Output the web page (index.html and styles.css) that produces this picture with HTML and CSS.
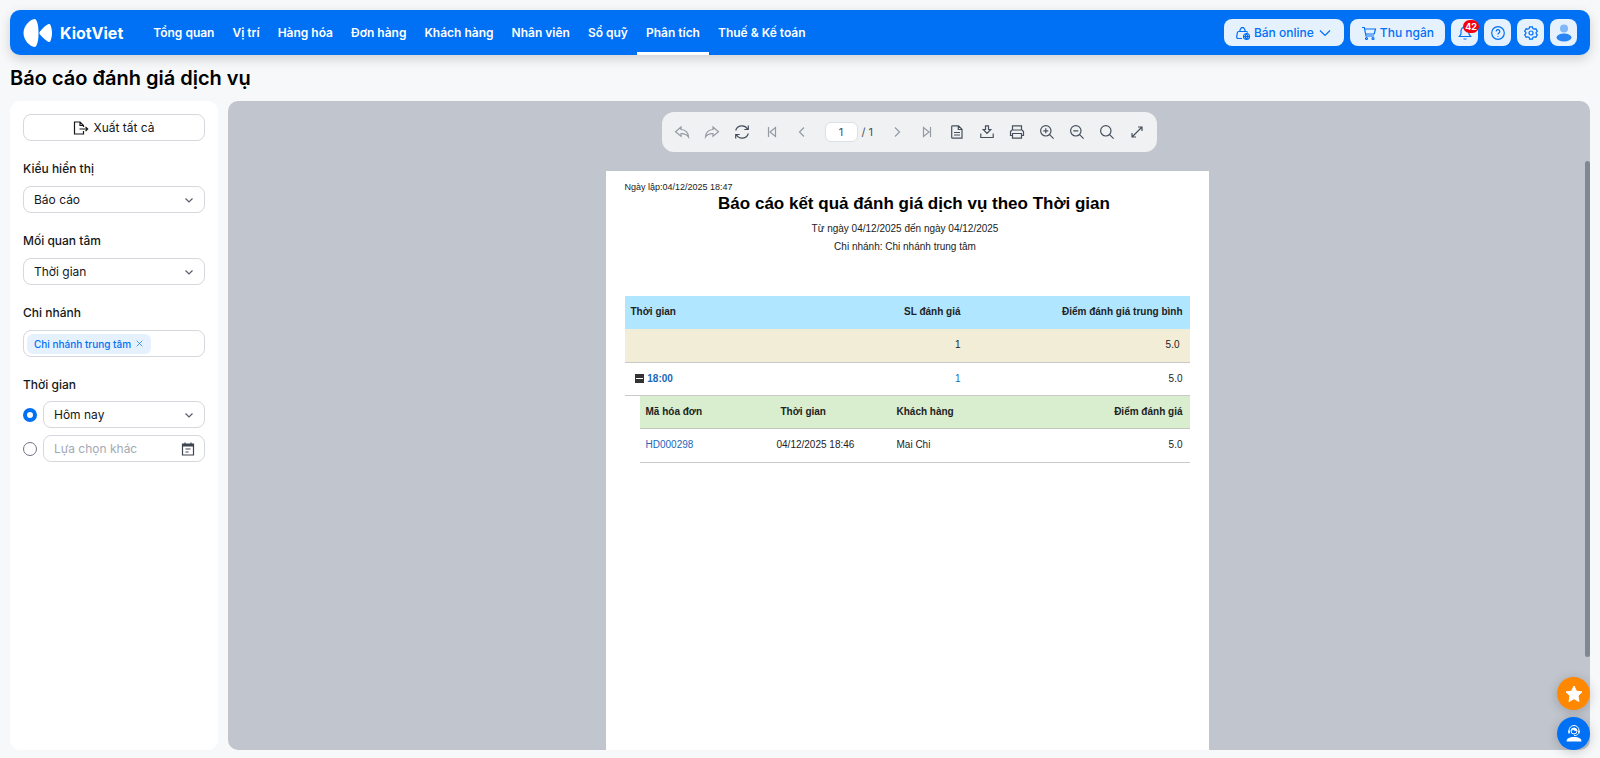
FILE: index.html
```
<!DOCTYPE html>
<html lang="vi">
<head>
    <meta charset="UTF-8">
    <meta name="viewport" content="width=device-width, initial-scale=1.0">
    <title>Báo cáo đánh giá dịch vụ</title>
    <link rel="stylesheet" href="styles.css">
</head>
<body>
    <header class="topbar">
        <a class="logo" href="#">
            <svg width="30" height="30" viewBox="0 0 30 30" fill="currentColor"><path d="M11.5 1C13.500 1 15.500 5.500 15.500 15S13.500 29 11.500 29C7 28.500.5 22.500.5 15S7 1.500 11.500 1z"/><path d="M17 13.400C19 11 22.500 7.500 25 6.300c1.300-.6 2.200-.2 2.600 1 .9 2.500 1.400 5 1.400 7.700s-.5 5.200-1.400 7.700c-.4 1.200-1.300 1.600-2.600 1-2.500-1.200-6-4.700-8-7.100-.8-1.100-.8-2.100 0-3.200z"/></svg>
            <span>KiotViet</span>
        </a>
        <nav class="menu">
            <a href="#">Tổng quan</a>
            <a href="#">Vị trí</a>
            <a href="#">Hàng hóa</a>
            <a href="#">Đơn hàng</a>
            <a href="#">Khách hàng</a>
            <a href="#">Nhân viên</a>
            <a href="#">Sổ quỹ</a>
            <a href="#" class="active">Phân tích</a>
            <a href="#">Thuế &amp; Kế toán</a>
        </nav>
        <div class="actions">
            <button type="button" class="action">
                <svg class="icon" viewBox="0 0 16 16"><path d="M7 13.500H3.200a1.500 1.500 0 0 1-1.500-1.700l.6-4A1.500 1.500 0 0 1 3.800 6.500h7.400a1.500 1.500 0 0 1 1.400 1M5 6.500V5l1.500-2.300h2L10 5v1.500"/><circle cx="11.500" cy="11.500" r="3"/><path d="M8.500 11.500h6M11.500 8.500c-1.500 2-1.500 4 0 6M11.500 8.500c1.500 2 1.500 4 0 6"/></svg>
                Bán online
                <svg class="icon" viewBox="0 0 16 16"><path d="M3 5.500l5 5 5-5"/></svg>
            </button>
            <button type="button" class="action">
                <svg class="icon" viewBox="0 0 16 16"><path d="M1 2.500h2.300l1.700 8.500h8M3.600 4h10.900l-1.300 5H4.700"/><circle cx="5.500" cy="13.500" r="1"/><circle cx="12" cy="13.500" r="1"/></svg>
                Thu ngân
            </button>
            <button type="button" class="action square" aria-label="Thông báo">
                <svg class="icon" viewBox="0 0 16 16"><path d="M8 2a4 4 0 0 0-4 4v3l-1.700 2.500h11.400L12 9V6a4 4 0 0 0-4-4zM6.500 14h3"/></svg>
                <span class="badge">42</span>
            </button>
            <button type="button" class="action square" aria-label="Trợ giúp">
                <svg class="icon" viewBox="0 0 16 16"><circle cx="8" cy="8" r="6.300"/><path d="M6.200 6.500a1.800 1.800 0 1 1 2.700 1.500c-.6.400-.9.700-.9 1.400M8 11v.8"/></svg>
            </button>
            <button type="button" class="action square" aria-label="Thiết lập">
                <svg class="icon" viewBox="0 0 16 16"><path d="M6.600 1.800h2.800l.5 1.700 1.300.7 1.700-.4 1.400 2.400L13.100 7.500v1l1.200 1.300-1.400 2.400-1.700-.4-1.300.7-.5 1.700H6.600l-.5-1.700-1.300-.7-1.700.4-1.400-2.400 1.200-1.300v-1L1.700 6.200l1.400-2.400 1.700.4 1.300-.7z"/><circle cx="8" cy="8" r="2"/></svg>
            </button>
            <button type="button" class="action square" aria-label="Tài khoản">
                <svg class="avatar" viewBox="0 0 18 18"><circle cx="9" cy="4.500" r="4" fill="#7fb7f9"/><ellipse cx="9" cy="13.500" rx="7.500" ry="4" fill="#2684f5"/></svg>
            </button>
        </div>
    </header>

    <h1>Báo cáo đánh giá dịch vụ</h1>

    <div class="content">
        <aside class="filters">
            <button type="button" class="control export">
                <svg class="icon" viewBox="0 0 16 16"><path d="M10.500 11v3h-9V2H7l3.500 3.500V7M7 2v3.500h3.500M6.500 9h8M12.500 6.800L14.700 9l-2.200 2.200"/></svg>
                Xuất tất cả
            </button>
            <div class="group">
                <label for="view">Kiểu hiển thị</label>
                <div class="dropdown">
                    <select id="view" class="control"><option>Báo cáo</option><option>Biểu đồ</option></select>
                    <svg class="icon" viewBox="0 0 16 16"><path d="M4.500 6.500L8 10l3.500-3.500"/></svg>
                </div>
            </div>
            <div class="group">
                <label for="concern">Mối quan tâm</label>
                <div class="dropdown">
                    <select id="concern" class="control"><option>Thời gian</option></select>
                    <svg class="icon" viewBox="0 0 16 16"><path d="M4.500 6.500L8 10l3.500-3.500"/></svg>
                </div>
            </div>
            <div class="group">
                <label for="branch">Chi nhánh</label>
                <div class="control tags">
                    <span class="tag">Chi nhánh trung tâm
                        <button type="button" aria-label="Xóa"><svg class="icon" viewBox="0 0 16 16"><path d="M3 3l10 10M13 3L3 13"/></svg></button>
                    </span>
                    <input type="text" id="branch">
                </div>
            </div>
            <fieldset class="group">
                <legend>Thời gian</legend>
                <div class="choice">
                    <input type="radio" name="time" aria-label="Hôm nay" checked>
                    <div class="dropdown">
                        <select class="control" aria-label="Khoảng thời gian"><option>Hôm nay</option></select>
                        <svg class="icon" viewBox="0 0 16 16"><path d="M4.500 6.500L8 10l3.500-3.500"/></svg>
                    </div>
                </div>
                <div class="choice">
                    <input type="radio" name="time" aria-label="Lựa chọn khác">
                    <div class="dropdown">
                        <input type="text" class="control" placeholder="Lựa chọn khác" aria-label="Lựa chọn khác">
                        <svg class="icon calendar" viewBox="0 0 16 16"><path d="M2.500 3h11v11h-11zM2.500 3.800h11M2.500 4.800h11M5 1.500V4M11 1.500V4M5.500 8h5M5.500 11h3"/></svg>
                    </div>
                </div>
            </fieldset>
        </aside>

        <main class="viewer">
            <div class="toolbar">
                <button type="button" class="off" aria-label="Quay lại"><svg class="icon" viewBox="0 0 16 16"><path d="M7 3L1.500 7.700 7 12.300V9.700c3.500-.2 5.800.8 7.500 3.300-.3-4.500-3-7.200-7.500-7.500z"/></svg></button>
                <button type="button" class="off" aria-label="Tiếp"><svg class="icon" viewBox="0 0 16 16"><path d="M9 3l5.500 4.700L9 12.300V9.700c-3.500-.2-5.800.8-7.500 3.300.3-4.500 3-7.200 7.500-7.500z"/></svg></button>
                <button type="button" aria-label="Làm mới"><svg class="icon" viewBox="0 0 16 16"><path d="M1.700 6.500A6.500 6.500 0 0 1 13.500 5M14.300 9.500A6.500 6.500 0 0 1 2.500 11M14.300 1.500V5.500h-4M1.700 14.500v-4h4"/></svg></button>
                <button type="button" class="off" aria-label="Trang đầu"><svg class="icon" viewBox="0 0 16 16"><path d="M4.500 3v10M11.500 3.500v9L6 8z"/></svg></button>
                <button type="button" class="off" aria-label="Trang trước"><svg class="icon" viewBox="0 0 16 16"><path d="M10 3.500L5.500 8l4.500 4.500"/></svg></button>
                <label class="page"><input type="text" value="1" aria-label="Trang"> / 1</label>
                <button type="button" class="off" aria-label="Trang sau"><svg class="icon" viewBox="0 0 16 16"><path d="M6 3.500L10.500 8 6 12.500"/></svg></button>
                <button type="button" class="off" aria-label="Trang cuối"><svg class="icon" viewBox="0 0 16 16"><path d="M11.500 3v10M4.500 3.500v9L10 8z"/></svg></button>
                <button type="button" aria-label="Bản in"><svg class="icon" viewBox="0 0 16 16"><path d="M3.500 1.800h6L13 5.300v8.900H3.500a.8.8 0 0 1-.8-.8V2.600a.8.8 0 0 1 .8-.8zM9.300 2v3.500h3.500M5 8.500h6M5 11h6"/></svg></button>
                <button type="button" aria-label="Tải xuống"><svg class="icon" viewBox="0 0 16 16"><path d="M6.500 1.800h3v3.700h2.300L8 9.500 4.200 5.500h2.300zM1.800 9.500v4h12.400v-4"/></svg></button>
                <button type="button" aria-label="In"><svg class="icon" viewBox="0 0 16 16"><path d="M3.500 6V1.800h9V6M3.500 11.500h-2v-4L3 6h10l1.500 1.500v4h-2M3.500 9.500h9v4.700h-9z"/></svg></button>
                <button type="button" aria-label="Phóng to"><svg class="icon" viewBox="0 0 16 16"><circle cx="6.800" cy="6.800" r="5.200"/><path d="M10.600 10.600l4 4M4.300 6.800h5M6.800 4.300v5"/></svg></button>
                <button type="button" aria-label="Thu nhỏ"><svg class="icon" viewBox="0 0 16 16"><circle cx="6.800" cy="6.800" r="5.200"/><path d="M10.600 10.600l4 4M4.300 6.800h5"/></svg></button>
                <button type="button" aria-label="Tìm"><svg class="icon" viewBox="0 0 16 16"><circle cx="6.800" cy="6.800" r="5.200"/><path d="M10.600 10.600l4 4"/></svg></button>
                <button type="button" aria-label="Toàn màn hình"><svg class="icon" viewBox="0 0 16 16"><path d="M3 13L13 3M9 3h4v4M3 9v4h4"/></svg></button>
            </div>
            <div class="pages">
                <article class="paper">
                    <p class="created">Ngày lập:04/12/2025 18:47</p>
                    <h2>Báo cáo kết quả đánh giá dịch vụ theo Thời gian</h2>
                    <p class="info">Từ ngày 04/12/2025 đến ngày 04/12/2025</p>
                    <p class="info">Chi nhánh: Chi nhánh trung tâm</p>
                    <table class="report">
                        <thead>
                            <tr>
                                <th>Thời gian</th>
                                <th class="count num">SL đánh giá</th>
                                <th class="average num">Điểm đánh giá trung bình</th>
                            </tr>
                        </thead>
                        <tbody>
                            <tr class="summary">
                                <td></td>
                                <td class="num">1</td>
                                <td class="num total">5.0</td>
                            </tr>
                            <tr class="period">
                                <td>
                                    <button type="button" class="toggle" aria-label="Thu gọn"></button>
                                    <a href="#">18:00</a>
                                </td>
                                <td class="num"><span class="link">1</span></td>
                                <td class="num">5.0</td>
                            </tr>
                            <tr>
                                <td colspan="3" class="nested">
                                    <table class="detail">
                                        <thead>
                                            <tr>
                                                <th class="code">Mã hóa đơn</th>
                                                <th class="time">Thời gian</th>
                                                <th>Khách hàng</th>
                                                <th class="score num">Điểm đánh giá</th>
                                            </tr>
                                        </thead>
                                        <tbody>
                                            <tr>
                                                <td><a href="#">HD000298</a></td>
                                                <td>04/12/2025 18:46</td>
                                                <td>Mai Chi</td>
                                                <td class="num">5.0</td>
                                            </tr>
                                        </tbody>
                                    </table>
                                </td>
                            </tr>
                        </tbody>
                    </table>
                </article>
                <span class="scroll-thumb"></span>
            </div>
        </main>
    </div>

    <div class="floating">
        <button type="button" class="star" aria-label="Đánh giá"><svg width="20" height="20" viewBox="0 0 20 20" fill="#fff"><path d="M10 2l2.500 5.200 5.500.7-4 3.900 1 5.700-5-2.800-5 2.800 1-5.700-4-3.900 5.500-.7z" stroke="#fff" stroke-linejoin="round"/></svg></button>
        <button type="button" class="support" aria-label="Hỗ trợ"><svg width="20" height="20" viewBox="0 0 20 20"><path d="M2.500 17.500c0-3 2.500-4.500 7.500-4.500s7.500 1.500 7.500 4.500z" fill="#fff"/><path d="M5 8V6.500a5 5 0 0 1 10 0V8M14.500 9.500c-1 1.700-2.500 2-4.500 2" fill="none" stroke="#fff"/><circle cx="10" cy="7" r="3" fill="#0070f4" stroke="#fff"/><path d="M7 7c0-4 6-4 6 0-2 0-3-.5-4-1.500C8.700 6.300 8 6.800 7 7z" fill="#fff"/><path d="M4.300 6.500h1.500v3H4.300zM14.200 6.500h1.500v3h-1.500z" fill="#fff"/></svg></button>
    </div>
</body>
</html>
```
FILE: styles.css
```
* {
    box-sizing: border-box;
}
body {
    display: flex;
    flex-direction: column;
    height: 100vh;
    margin: 0;
    padding: 10px 10px 8px;
    overflow: hidden;
    background-color: #f7f8fa;
    color: #15171a;
    font-family: Inter, sans-serif;
    font-size: 12px;
}
button, input, select {
    font: inherit;
    color: inherit;
}
button {
    padding: 0;
    border: none;
    background: none;
    cursor: pointer;
}
a {
    text-decoration: none;
}
.icon {
    width: 16px;
    height: 16px;
    flex: none;
    fill: none;
    stroke: currentColor;
    stroke-width: 1.2;
}

/* header */
.topbar {
    display: flex;
    align-items: center;
    flex: none;
    height: 45px;
    padding: 0 13px;
    border-radius: 10px;
    background-color: #0070f4;
    box-shadow: 0 4px 12px rgba(0, 0, 0, 0.16);
}
.logo {
    display: flex;
    align-items: center;
    gap: 7px;
    margin-right: 21px;
    color: white;
    font-size: 16px;
    font-weight: 700;
}
.menu {
    display: flex;
    height: 100%;
}
.menu a {
    padding: 0 9px;
    border-radius: 2px 2px 0 0;
    color: white;
    font-weight: 600;
    line-height: 45px;
}
.menu .active {
    border-bottom: 3px solid white;
}
.actions {
    display: flex;
    gap: 6px;
    margin-left: auto;
}
.action {
    position: relative;
    display: flex;
    align-items: center;
    justify-content: center;
    gap: 3px;
    height: 27px;
    padding: 0 11px;
    border-radius: 8px;
    background-color: #e6f1fe;
    color: #0070f4;
    font-weight: 500;
}
.square {
    width: 27px;
    padding: 0;
}
.badge {
    position: absolute;
    top: 1px;
    right: -1px;
    padding: 0 2px;
    border-radius: 7px;
    background-color: #f5000f;
    color: white;
    font-size: 9px;
    font-weight: 700;
    line-height: 13px;
}
.avatar {
    width: 18px;
    height: 18px;
}
h1 {
    margin: 9px 0;
    color: #000;
    font-size: 20px;
    font-weight: 600;
    line-height: 28px;
}

/* filters */
.content {
    display: flex;
    flex: 1;
    gap: 10px;
    min-height: 0;
}
.filters {
    display: flex;
    flex-direction: column;
    flex: none;
    gap: 18px;
    width: 208px;
    padding: 13px;
    border-radius: 10px;
    background-color: white;
}
.control {
    width: 100%;
    height: 27px;
    padding: 0 10px;
    border: 1px solid #d5d8dd;
    border-radius: 8px;
    background-color: white;
    appearance: none;
    outline: none;
}
.control::placeholder {
    color: #a3a9b3;
}
.export {
    display: flex;
    align-items: center;
    justify-content: center;
    gap: 4px;
}
.group {
    display: flex;
    flex-direction: column;
    gap: 7px;
    margin: 0;
    padding: 0;
    border: none;
}
.group label, .group legend {
    padding: 0;
    font-weight: 500;
    line-height: 20px;
}
.group legend {
    margin-bottom: 6px;
}
.dropdown {
    position: relative;
    flex: 1;
}
.dropdown .icon {
    position: absolute;
    top: 6px;
    right: 8px;
    color: #555d68;
    pointer-events: none;
}
.dropdown .calendar {
    right: 9px;
    color: #3c4450;
}
.tags {
    display: flex;
    align-items: center;
    padding: 0 3px;
}
.tags input {
    flex: 1;
    min-width: 0;
    border: none;
    outline: none;
}
.tag {
    display: flex;
    align-items: center;
    gap: 4px;
    padding: 0 7px;
    border-radius: 6px;
    background-color: #e6f1fe;
    color: #0070f4;
    font-size: 10px;
    font-weight: 500;
    line-height: 20px;
    white-space: nowrap;
}
.tag button {
    display: flex;
}
.tag .icon {
    width: 9px;
    height: 9px;
}
.choice {
    display: flex;
    align-items: center;
    gap: 6px;
}
.choice input[type="radio"] {
    width: 14px;
    height: 14px;
    margin: 0;
    border: 1px solid #6d7480;
    border-radius: 50%;
    appearance: none;
}
.choice input[type="radio"]:checked {
    border: 4px solid #0070f4;
}

/* report viewer */
.viewer {
    display: flex;
    flex-direction: column;
    align-items: center;
    flex: 1;
    min-width: 0;
    padding-top: 11px;
    border-radius: 10px;
    background-color: #c1c5cd;
    overflow: hidden;
}
.toolbar {
    display: flex;
    align-items: center;
    flex: none;
    height: 40px;
    padding: 0 5px;
    border-radius: 12px;
    background-color: #f0f1f3;
    color: #46505c;
}
.toolbar button {
    display: flex;
    align-items: center;
    justify-content: center;
    width: 30px;
    height: 30px;
}
.toolbar .off {
    color: #949ba5;
}
.page {
    display: flex;
    gap: 4px;
    width: 65px;
    padding-left: 8px;
    font-size: 11px;
    line-height: 20px;
    white-space: nowrap;
}
.page input {
    width: 33px;
    height: 20px;
    padding: 0;
    border: 1px solid #dcdfe3;
    border-radius: 6px;
    background-color: white;
    text-align: center;
}
.pages {
    position: relative;
    flex: 1;
    align-self: stretch;
    min-height: 0;
    padding: 19px 4px 0 0;
    overflow: hidden;
}
.scroll-thumb {
    position: absolute;
    top: 9px;
    right: 0;
    width: 5px;
    height: 83%;
    border-radius: 3px;
    background-color: #7f8994;
}
.paper {
    width: 603px;
    min-height: 853px;
    margin: 0 auto;
    padding: 10px 19px;
    background-color: white;
    color: #222;
    font-family: "Liberation Sans", sans-serif;
    font-size: 10px;
}
.paper p {
    margin: 0;
}
.created {
    font-size: 9px;
    line-height: 12px;
}
h2 {
    margin: 0 0 5px;
    padding-left: 14px;
    color: #000;
    font-size: 17px;
    line-height: 22px;
    text-align: center;
    white-space: nowrap;
}
.info {
    padding-right: 4px;
    line-height: 18px;
    text-align: center;
}
.paper table {
    width: 100%;
    border-collapse: separate;
    border-spacing: 0;
    table-layout: fixed;
}
.paper .report {
    margin-top: 40px;
}
.paper th, .paper td {
    height: 33px;
    padding: 0 7px 2px 6px;
    text-align: left;
}
.paper td {
    border-bottom: 1px solid #c9c9c9;
}
.paper a, .link {
    color: #1a68ba;
}
.paper .num {
    text-align: right;
}
.report th {
    background-color: #b0e6ff;
}
.count {
    width: 120px;
}
.average {
    width: 222px;
}
.paper .summary td {
    height: 34px;
    background-color: #f2edd7;
}
.paper .summary .total {
    padding-right: 10px;
}
.period td:first-child {
    padding-left: 10px;
    font-weight: bold;
}
.toggle {
    width: 9px;
    height: 9px;
    margin-right: 1px;
    border: solid #333;
    border-width: 4px 1px;
    background-color: white;
    vertical-align: middle;
}
.period a {
    vertical-align: middle;
}
.paper .nested {
    padding: 0 0 0 15px;
    border: none;
}
.paper .detail th {
    border-bottom: 1px solid #c0c9bc;
    background-color: #d8eecf;
}
.paper .detail td {
    height: 34px;
}
.code {
    width: 131px;
}
.paper .time {
    width: 120px;
    padding-left: 10px;
}
.score {
    width: 150px;
}

/* floating buttons */
.floating {
    position: fixed;
    right: 10px;
    bottom: 8px;
    display: flex;
    flex-direction: column;
    gap: 7px;
}
.floating button {
    display: flex;
    align-items: center;
    justify-content: center;
    width: 33px;
    height: 33px;
    border-radius: 50%;
    box-shadow: 0 2px 12px rgba(0, 0, 0, 0.2);
}
.floating .star {
    background-color: #ff8800;
}
.floating .support {
    background-color: #0070f4;
}
```
